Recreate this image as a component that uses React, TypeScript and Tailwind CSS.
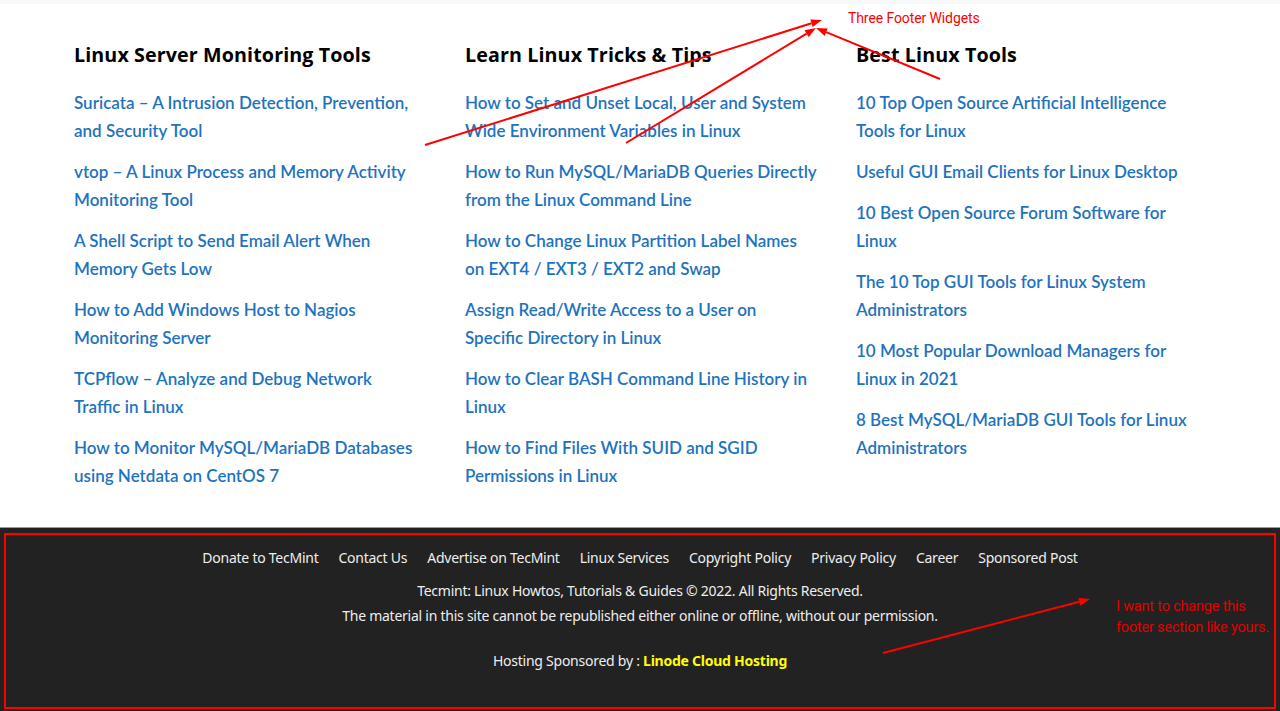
const widgets: { title: string; items: string[][] }[] = [
  {
    title: 'Linux Server Monitoring Tools',
    items: [
      ['Suricata – A Intrusion Detection, Prevention,', 'and Security Tool'],
      ['vtop – A Linux Process and Memory Activity', 'Monitoring Tool'],
      ['A Shell Script to Send Email Alert When', 'Memory Gets Low'],
      ['How to Add Windows Host to Nagios', 'Monitoring Server'],
      ['TCPflow – Analyze and Debug Network', 'Traffic in Linux'],
      ['How to Monitor MySQL/MariaDB Databases', 'using Netdata on CentOS 7'],
    ],
  },
  {
    title: 'Learn Linux Tricks & Tips',
    items: [
      ['How to Set and Unset Local, User and System', 'Wide Environment Variables in Linux'],
      ['How to Run MySQL/MariaDB Queries Directly', 'from the Linux Command Line'],
      ['How to Change Linux Partition Label Names', 'on EXT4 / EXT3 / EXT2 and Swap'],
      ['Assign Read/Write Access to a User on', 'Specific Directory in Linux'],
      ['How to Clear BASH Command Line History in', 'Linux'],
      ['How to Find Files With SUID and SGID', 'Permissions in Linux'],
    ],
  },
  {
    title: 'Best Linux Tools',
    items: [
      ['10 Top Open Source Artificial Intelligence', 'Tools for Linux'],
      ['Useful GUI Email Clients for Linux Desktop'],
      ['10 Best Open Source Forum Software for', 'Linux'],
      ['The 10 Top GUI Tools for Linux System', 'Administrators'],
      ['10 Most Popular Download Managers for', 'Linux in 2021'],
      ['8 Best MySQL/MariaDB GUI Tools for Linux', 'Administrators'],
    ],
  },
];

const footerLinks = [
  'Donate to TecMint',
  'Contact Us',
  'Advertise on TecMint',
  'Linux Services',
  'Copyright Policy',
  'Privacy Policy',
  'Career',
  'Sponsored Post',
];

function Arrow({ x1, y1, x2, y2 }: { x1: number; y1: number; x2: number; y2: number }) {
  const a = Math.atan2(y2 - y1, x2 - x1);
  const len = 11;
  const w = 4;
  const bx = x2 - len * Math.cos(a);
  const by = y2 - len * Math.sin(a);
  const px = -Math.sin(a) * w;
  const py = Math.cos(a) * w;
  return (
    <g>
      <line x1={x1} y1={y1} x2={bx} y2={by} stroke="#ff0000" strokeWidth={2} />
      <polygon points={`${x2},${y2} ${bx + px},${by + py} ${bx - px},${by - py}`} fill="#ff0000" />
    </g>
  );
}

function Widget({ title, items }: { title: string; items: string[][] }) {
  return (
    <div className="flex flex-col">
      <h3 className="text-[19.7px] font-bold text-black leading-[28px] mb-[20px] font-['Open_Sans',sans-serif] tracking-[0.1px]">
        {title}
      </h3>
      <ul className="flex flex-col gap-[13px]">
        {items.map((lines, i) => (
          <li key={i} className="text-[17px] font-semibold leading-[28px] text-[#1e73be]">
            <a href="#">
              {lines.map((l, j) => (
                <span key={j} className="block">
                  {l}
                </span>
              ))}
            </a>
          </li>
        ))}
      </ul>
    </div>
  );
}

export default function App() {
  return (
    <div className="relative w-[1280px] h-[711px] overflow-hidden bg-white font-['Lato','Noto_Sans',sans-serif]">
      <div className="h-[4px] bg-[#f7f8fa]" />
      <div className="grid grid-cols-[391px_391px_391px] pl-[74px] pt-[37px] h-[523px]">
        {widgets.map((w) => (
          <Widget key={w.title} title={w.title} items={w.items} />
        ))}
      </div>

      <footer className="h-[184px] bg-[#222222] border-t border-[#9a9a9a] pt-[5px] px-[4px] pb-[2px] font-['Noto_Sans',sans-serif]">
        <div className="h-full border-2 border-[#ff0000] flex flex-col items-center pt-[13px] text-[#eeeeee] text-[14px]">
          <nav className="flex gap-[20px] leading-[20px]">
            {footerLinks.map((l) => (
              <a key={l} href="#" className="tracking-[-0.25px]">
                {l}
              </a>
            ))}
          </nav>
          <p className="mt-[13px] leading-[20px] tracking-[-0.25px]">
            Tecmint: Linux Howtos, Tutorials &amp; Guides © 2022. All Rights Reserved.
          </p>
          <p className="mt-[5px] leading-[20px] tracking-[-0.25px]">
            The material in this site cannot be republished either online or offline, without our permission.
          </p>
          <p className="mt-[25px] leading-[20px] tracking-[-0.25px]">
            Hosting Sponsored by : <a href="#" className="font-bold text-[#ffff00]">Linode Cloud Hosting</a>
          </p>
        </div>
      </footer>

      <svg className="absolute inset-0 pointer-events-none" width={1280} height={711}>
        <Arrow x1={425} y1={145} x2={822} y2={20} />
        <Arrow x1={626} y1={143} x2={816} y2={28} />
        <Arrow x1={940} y1={79} x2={816} y2={28} />
        <Arrow x1={883} y1={653} x2={1090} y2={599} />
      </svg>
      <div className="absolute left-[848px] top-[9px] text-[14px] leading-[19px] text-[#ff0000] font-['Roboto',sans-serif] tracking-[-0.1px]">
        Three Footer Widgets
      </div>
      <div className="absolute left-[1116px] top-[596px] text-[14.5px] leading-[21px] text-[#e00000] font-['Roboto',sans-serif] tracking-[-0.2px]">
        I want to change this
        <br />
        footer section like yours.
      </div>
    </div>
  );
}
